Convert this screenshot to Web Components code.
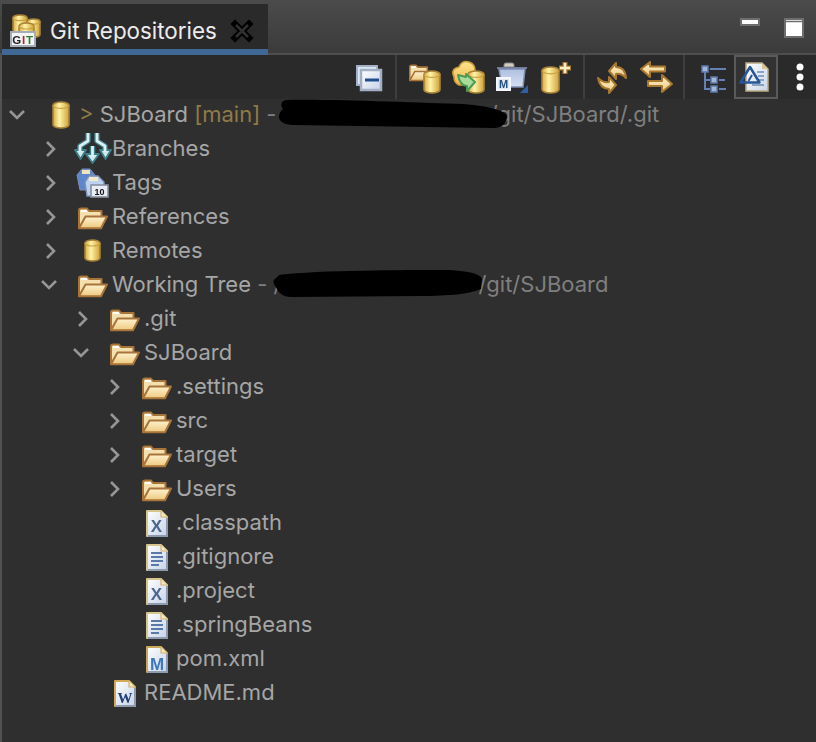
<!DOCTYPE html>
<html>
<head>
<meta charset="utf-8">
<style>
  html, body { margin: 0; background: #2f2f2f; }
  body { font-family: Inter, "Liberation Sans", sans-serif; }
</style>
</head>
<body>
<git-view>
  <view-tab slot="tab" label="Git Repositories"></view-tab>

  <tool-button slot="tools"><app-icon name="collapse"></app-icon></tool-button>
  <tool-sep slot="tools"></tool-sep>
  <tool-button slot="tools"><app-icon name="openRepo"></app-icon></tool-button>
  <tool-button slot="tools"><app-icon name="cloneRepo"></app-icon></tool-button>
  <tool-button slot="tools"><app-icon name="maven"></app-icon></tool-button>
  <tool-button slot="tools"><app-icon name="addRepo"></app-icon></tool-button>
  <tool-sep slot="tools"></tool-sep>
  <tool-button slot="tools"><app-icon name="sync"></app-icon></tool-button>
  <tool-button slot="tools"><app-icon name="swap"></app-icon></tool-button>
  <tool-sep slot="tools"></tool-sep>
  <tool-button slot="tools"><app-icon name="hierarchy"></app-icon></tool-button>
  <tool-button slot="tools" active><app-icon name="docLink"></app-icon></tool-button>
  <tool-button slot="tools"><app-icon name="kebab"></app-icon></tool-button>

  <tree-row slot="rows" depth="0" toggle="open" icon="repo"><span class="deco lead">&gt; </span>SJBoard <span class="deco">[main]</span><span class="dim"> - <redact-blob shape="a"></redact-blob>/git/SJBoard/.git</span></tree-row>
  <tree-row slot="rows" depth="1" toggle="closed" icon="branches">Branches</tree-row>
  <tree-row slot="rows" depth="1" toggle="closed" icon="tags">Tags</tree-row>
  <tree-row slot="rows" depth="1" toggle="closed" icon="folder">References</tree-row>
  <tree-row slot="rows" depth="1" toggle="closed" icon="remote">Remotes</tree-row>
  <tree-row slot="rows" depth="1" toggle="open" icon="folder">Working Tree<span class="dim"> - /<redact-blob shape="b"></redact-blob>/git/SJBoard</span></tree-row>
  <tree-row slot="rows" depth="2" toggle="closed" icon="folder">.git</tree-row>
  <tree-row slot="rows" depth="2" toggle="open" icon="folder">SJBoard</tree-row>
  <tree-row slot="rows" depth="3" toggle="closed" icon="folder">.settings</tree-row>
  <tree-row slot="rows" depth="3" toggle="closed" icon="folder">src</tree-row>
  <tree-row slot="rows" depth="3" toggle="closed" icon="folder">target</tree-row>
  <tree-row slot="rows" depth="3" toggle="closed" icon="folder">Users</tree-row>
  <tree-row slot="rows" depth="3" icon="xmlFile">.classpath</tree-row>
  <tree-row slot="rows" depth="3" icon="textFile">.gitignore</tree-row>
  <tree-row slot="rows" depth="3" icon="xmlFile">.project</tree-row>
  <tree-row slot="rows" depth="3" icon="textFile">.springBeans</tree-row>
  <tree-row slot="rows" depth="3" icon="pomFile">pom.xml</tree-row>
  <tree-row slot="rows" depth="2" icon="wordFile">README.md</tree-row>
</git-view>

<script>
// shared gradients, scoped per shadow root so the ids can repeat
const DEFS = `<defs>
  <linearGradient id="gold" x1="0" x2="1" y1="0" y2="0">
    <stop offset="0" stop-color="#d8ac42"/><stop offset=".4" stop-color="#fff3a8"/><stop offset="1" stop-color="#cfa238"/>
  </linearGradient>
  <linearGradient id="fold" x1="0" x2="0" y1="0" y2="1">
    <stop offset="0" stop-color="#fdf2cf"/><stop offset="1" stop-color="#efc97f"/>
  </linearGradient>
  <linearGradient id="paper" x1="0" x2="1" y1="0" y2="1">
    <stop offset="0" stop-color="#ffffff"/><stop offset="1" stop-color="#c6d3e8"/>
  </linearGradient>
  <linearGradient id="pot" x1="0" x2="0" y1="0" y2="1">
    <stop offset="0" stop-color="#aebfe0"/><stop offset="1" stop-color="#d6e0f2"/>
  </linearGradient>
  <linearGradient id="cloud" x1="0" x2="0" y1="0" y2="1">
    <stop offset="0" stop-color="#fde58c"/><stop offset="1" stop-color="#eeb64e"/>
  </linearGradient>
</defs>`

function cyl(x, y, w, h) {
  const e = Math.max(2.5, w * 0.2)
  return `<path d="M${x} ${y + e}a${w / 2} ${e} 0 0 1 ${w} 0v${h - 2 * e}a${w / 2} ${e} 0 0 1 ${-w} 0z" fill="url(#gold)" stroke="#a98238" stroke-width="1.6"/>
    <path d="M${x} ${y + e}a${w / 2} ${e} 0 0 0 ${w} 0" fill="none" stroke="#c9a33f" stroke-width="1.2"/>`
}

function folder(x, y, s) {
  return `<g transform="translate(${x} ${y}) scale(${s})">
    <path d="M1 21V3.500Q1 1.500 3 1.500H9L11 4H23.500V10H8L1 21Z" fill="#f4dfae" stroke="#a8743a" stroke-width="2" stroke-linejoin="round"/>
    <path d="M3 3H9V5H3Z" fill="#fff"/>
    <path d="M1 21.200L7.500 9.500H29L23 21.200Z" fill="url(#fold)" stroke="#a8743a" stroke-width="2" stroke-linejoin="round"/>
  </g>`
}

function fileShape(edge) {
  return `<path d="M5 3H19L25 9V28H5Z" fill="url(#paper)" stroke="${edge}" stroke-width="2" stroke-linejoin="round"/>
    <path d="M19 3V9H25" fill="#f6e7bd" stroke="#cdb47a" stroke-width="1.2"/>
    <path d="M25 10V28H6" fill="none" stroke="#8d9ab0" stroke-width="2"/>`
}

const ICONS = {
  repo: () => cyl(7, 2, 16, 26),
  remote: () => cyl(7, 4, 15, 21),
  folder: () => folder(0, 5, 1),
  branches: () => `<g fill="none" stroke-linejoin="round">
      <path d="M10 -1V7L2 12V18M19 -1V7L27 12V18M14.500 12V24" stroke="#3d7f8a" stroke-width="5.500"/>
      <path d="M-3 16L2.500 25L8 16ZM22 16L27.500 25L33 16ZM8 20L14.500 29L21 20Z" fill="#cfe8ea" stroke="#3d7f8a" stroke-width="1.800"/>
      <path d="M10 -1V7L2 12V18M19 -1V7L27 12V18M14.500 12V23" stroke="#dcf0f2" stroke-width="2.800"/>
    </g>`,
  tags: () => `<path d="M-1 7L4 1H12L17 7V22H2Z" fill="#5f86cc" stroke="#7b8fb5"/>
    <path d="M4 2H12V6H4Z" fill="#f1e3bb"/>
    <path d="M7 14L11 8H20L26 14V28H9Z" fill="#bcd2f0" stroke="#7f93b8" stroke-width="1.400"/>
    <path d="M11 9H20V13H11Z" fill="#f5e9c8"/>
    <rect x="13" y="17" width="17" height="12" fill="#e8edf5" stroke="#87909e" stroke-width="1.600"/>
    <text x="21.500" y="26.500" text-anchor="middle" font-family="Liberation Sans" font-weight="700" font-size="9" fill="#111">10</text>`,
  xmlFile: () => fileShape("#d8c58e") + `<text x="14.500" y="23.500" text-anchor="middle" font-family="Liberation Sans" font-weight="700" font-size="17" fill="#4a6691">X</text>`,
  textFile: () => fileShape("#d8c58e") + `<path d="M9 11H20M9 15H21M9 19H21M9 23H17" stroke="#5a78aa" stroke-width="1.800"/>`,
  pomFile: () => fileShape("#c9a85e") + `<text x="15" y="26" text-anchor="middle" font-family="Liberation Sans" font-weight="700" font-size="17" fill="#3f78b8">M</text>`,
  wordFile: () => fileShape("#d1aa55") + `<text x="15" y="24.500" text-anchor="middle" font-family="Liberation Serif" font-weight="700" font-size="15" fill="#1f3f77">W</text>`,

  tabGit: () => cyl(3, 0, 14, 18) + cyl(17, 4, 13, 18) + cyl(9, 8, 15, 14) +
    `<rect x="1" y="17" width="24" height="14" fill="#f2f4f6" stroke="#a4acb8" stroke-width="2"/>
     <text x="13" y="28.500" text-anchor="middle" font-family="Liberation Sans" font-weight="700" font-size="11.500" letter-spacing=".8" fill="#222">G<tspan fill="#b3261e">I</tspan><tspan fill="#2e7d32">T</tspan></text>`,
  tabClose: () => `<path d="M3 3L17 17M17 3L3 17" stroke="#000" stroke-width="6.500" stroke-linecap="square"/>
    <path d="M4 4L16 16M16 4L4 16" stroke="#303030" stroke-width="2.600"/>`,

  collapse: () => `<rect x="11" y="11" width="20" height="19" fill="#dce8f4" stroke="#a3afc4" stroke-width="2"/>
    <rect x="15" y="15" width="20" height="20" fill="url(#paper)" stroke="#a3afc4" stroke-width="2.500"/>
    <path d="M19 25H33" stroke="#1f4d8c" stroke-width="3"/>`,
  openRepo: () => folder(7, 9, .78) + cyl(22, 16, 16, 22),
  cloneRepo: () => `<path d="M8 22Q4 14 13 12Q16 5 23 7Q29 9 29 15L29 30H13Q8 28 8 22Z" fill="url(#cloud)" stroke="#c89a3a" stroke-width="1.500"/>` +
    cyl(22, 16, 16, 22) +
    `<path d="M12 20L20 22V19L29 27L21 36V31Q14 31 12 20Z" fill="#a9dc9a" stroke="#4c9a58" stroke-width="2" stroke-linejoin="round"/>`,
  maven: () => `<path d="M14 10Q14 8 16 8H22Q24 8 24 10V12H14Z" fill="#d3cdbf" stroke="#8a8a90"/>
    <path d="M7 13H37" stroke="#6f7b98" stroke-width="2"/>
    <path d="M9 14H35L33 32H12Z" fill="url(#pot)" stroke="#7e8db0" stroke-width="1.500"/>
    <rect x="7" y="23" width="13" height="12" fill="#dfe8f4" stroke="#f4f6f9" stroke-width="2"/>
    <text x="13.500" y="33" text-anchor="middle" font-family="Liberation Sans" font-weight="700" font-size="11" fill="#24507f">M</text>
    <path d="M38 30V38H30Z" fill="#2f5fa5"/>`,
  addRepo: () => cyl(8, 12, 17, 26) +
    `<path d="M31 7V19M25 13H37" stroke="#a67a33" stroke-width="5"/><path d="M31 8V18M26 13H36" stroke="#fbeec2" stroke-width="2.500"/>`,
  sync: () => `<g stroke="#a8782e" stroke-width="2" stroke-linejoin="round" fill="url(#fold)">
      <path d="M19 16L26 8V12Q35 12 36 23Q31 18 26 19V24Z"/>
      <path d="M26 30L19 38V34Q10 34 8 23Q13 28 19 27V22Z"/>
    </g>`,
  swap: () => `<g stroke="#a8782e" stroke-width="2" stroke-linejoin="round" fill="url(#fold)">
      <path d="M7 14L16 7V11.500H31V16.500H16V22Z"/>
      <path d="M38 29L28 20V26H14V31H28V37Z"/>
    </g>`,
  hierarchy: () => `<path d="M15 15V34H20M15 25H20" fill="none" stroke="#6480b4" stroke-width="2"/>
    <path d="M20 14H36M29 25H35M29 34H36" stroke="#6480b4" stroke-width="2"/>
    <rect x="12" y="11" width="6" height="6" fill="#a4b6d6" stroke="#5d79ad" stroke-width="1.500"/>
    <rect x="21" y="22" width="6" height="6" fill="#a4b6d6" stroke="#5d79ad" stroke-width="1.500"/>
    <rect x="21" y="31" width="6" height="6" fill="#a4b6d6" stroke="#5d79ad" stroke-width="1.500"/>`,
  docLink: () => `<path d="M12 8H28L34 14V36H12Z" fill="url(#paper)" stroke="#b7a982" stroke-width="1.500"/>
    <path d="M28 8V14H34" fill="#d8c48d"/>
    <path d="M23 17H30M24 21H30M24 25H30M18 30H30" stroke="#6a86b4" stroke-width="1.500"/>
    <path d="M6.500 27.500L16 12L25.500 27.500Z" fill="none" stroke="#1f4f92" stroke-width="2.500" stroke-linejoin="round"/>
    <path d="M14.500 26L18 20" stroke="#1f4f92" stroke-width="2"/>`,
  kebab: () => `<circle cx="22" cy="12" r="3.500" fill="#fff"/><circle cx="22" cy="22" r="3.500" fill="#fff"/><circle cx="22" cy="32" r="3.500" fill="#fff"/>`,
  winMin: () => `<rect x="1" y="1" width="18" height="6" fill="#fff" stroke="#6e6e6e" stroke-width="2"/>`,
  winMax: () => `<rect x="1" y="1" width="18" height="18" fill="#fff" stroke="#6e6e6e" stroke-width="2"/><path d="M2 3.500H18" stroke="#6e6e6e" stroke-width="1.500"/>`
}

const SIZES = { tabGit: [32, 32], tabClose: [20, 20], winMin: [20, 8], winMax: [20, 20] }
const TOOL_ICONS = ["collapse", "openRepo", "cloneRepo", "maven", "addRepo", "sync", "swap", "hierarchy", "docLink", "kebab"]
// the original icons are upscaled 16px bitmaps, so most of them look a bit soft
const CRISP = ["kebab", "winMin", "winMax", "tabClose"]

class AppIcon extends HTMLElement {
  static get observedAttributes() {
    return ["name"]
  }
  constructor() {
    super()
    this.attachShadow({ mode: "open" })
  }
  attributeChangedCallback() {
    const name = this.getAttribute("name")
    if (!ICONS[name]) return
    const tool = TOOL_ICONS.includes(name)
    const [w, h] = SIZES[name] || (tool ? [44, 44] : [30, 30])
    const soft = CRISP.includes(name) ? "" : "filter: blur(.4px);"
    this.shadowRoot.innerHTML = `
      <style>
        :host { display: block; width: ${w}px; height: ${h}px; flex: none; }
        svg { display: block; overflow: visible; ${soft} }
      </style>
      <svg width="${w}" height="${h}" viewBox="0 0 ${w} ${h}">${DEFS}${ICONS[name]()}</svg>`
  }
}
customElements.define("app-icon", AppIcon)

const viewTemplate = document.createElement("template")
viewTemplate.innerHTML = `
  <style>
    :host { display: block; width: 816px; height: 742px; background: #2f2f2f; overflow: hidden; }
    .head {
      display: flex; height: 53px; padding: 4px 0 0 2px; box-sizing: border-box;
      background: linear-gradient(#4b4b4b, #3b3b3b);
    }
    .win { margin-left: auto; display: flex; gap: 24px; padding: 14px 12px 0 0; align-items: flex-start; }
    .bar {
      display: flex; height: 44px; padding-left: 344px;
      background: #2a2a2a; border-top: 2px solid #4e4e4e; border-left: 2px solid #525252;
    }
    .rows { margin-top: -1px; border-left: 2px solid #525252; height: 646px; }
  </style>
  <div class="head">
    <slot name="tab"></slot>
    <div class="win">
      <app-icon name="winMin"></app-icon>
      <app-icon name="winMax"></app-icon>
    </div>
  </div>
  <div class="bar"><slot name="tools"></slot></div>
  <div class="rows"><slot name="rows"></slot></div>
`
class GitView extends HTMLElement {
  constructor() {
    super()
    this.attachShadow({ mode: "open" })
    this.shadowRoot.appendChild(viewTemplate.content.cloneNode(true))
  }
}
customElements.define("git-view", GitView)

class ViewTab extends HTMLElement {
  constructor() {
    super()
    this.attachShadow({ mode: "open" })
    this.shadowRoot.innerHTML = `
      <style>
        :host {
          display: flex; align-items: center; box-sizing: border-box;
          width: 266px; height: 51px; padding: 8px 16px 0 8px;
          background: #2a2a2a; border-bottom: 6px solid #3f6894;
          color: #ececec; font: 22.4px Inter, "Liberation Sans", sans-serif;
        }
        .name { margin-left: 8px; flex: 1; }
      </style>
      <app-icon name="tabGit"></app-icon>
      <span class="name">${this.getAttribute("label")}</span>
      <app-icon name="tabClose"></app-icon>`
  }
}
customElements.define("view-tab", ViewTab)

class ToolButton extends HTMLElement {
  constructor() {
    super()
    this.attachShadow({ mode: "open" })
    this.shadowRoot.innerHTML = `
      <style>
        :host { display: block; position: relative; width: 44px; height: 44px; flex: none; }
        :host([active])::after {
          content: ""; position: absolute; inset: 0;
          border: 2px solid #5a5a5a; background: #ffffff0a;
        }
      </style>
      <slot></slot>`
  }
}
customElements.define("tool-button", ToolButton)

class ToolSep extends HTMLElement {
  constructor() {
    super()
    this.attachShadow({ mode: "open" })
    this.shadowRoot.innerHTML = `<style>:host { display: block; width: 2px; height: 44px; margin: 0 5px; background: #3e3e3e; flex: none; }</style>`
  }
}
customElements.define("tool-sep", ToolSep)

const rowTemplate = document.createElement("template")
rowTemplate.innerHTML = `
  <style>
    :host {
      display: flex; align-items: center; height: 34px;
      color: #a6a6a6; font: 22px Inter, "Liberation Sans", sans-serif; white-space: nowrap;
    }
    .arrow { width: 32px; height: 34px; flex: none; margin-right: 12px; }
    .arrow svg { display: block; }
    .label { margin-left: 4px; position: relative; top: -1px; }
    ::slotted(.deco) { color: #8f7b47; }
    ::slotted(.lead) { margin-left: -1px; }
    ::slotted(.dim) { color: #7f7f7f; }
  </style>
  <div class="arrow"></div>
  <app-icon></app-icon>
  <span class="label"><slot></slot></span>
`
class TreeRow extends HTMLElement {
  constructor() {
    super()
    this.attachShadow({ mode: "open" })
    this.shadowRoot.appendChild(rowTemplate.content.cloneNode(true))
    const depth = parseInt(this.getAttribute("depth") || "0")
    this.style.paddingLeft = `${32 * depth}px`
    this.shadowRoot.querySelector("app-icon").setAttribute("name", this.getAttribute("icon"))
    const toggle = this.getAttribute("toggle")
    const arrow = this.shadowRoot.querySelector(".arrow")
    if (toggle == "open") {
      arrow.innerHTML = `<svg width="32" height="34"><path d="M8 13L15 20L22 13" fill="none" stroke="#969696" stroke-width="2.600"/></svg>`
    } else if (toggle == "closed") {
      arrow.innerHTML = `<svg width="32" height="34"><path d="M13 10L20 17L13 24" fill="none" stroke="#969696" stroke-width="2.600"/></svg>`
    }
  }
}
customElements.define("tree-row", TreeRow)

// scribbled-out part of a path: holds its width in the line, the ink lies over the text
const BLOBS = {
  a: { w: 207, left: -5, d: "M8 1C60 0 140 4 186 5C206 7 226 10 229 17C229 24 224 29 216 29L15 26C6 26 1 22 1 18C1 14 3 12 5 10C2 6 3 2 8 1Z" },
  b: { w: 197, left: -10, d: "M8 6C50 1 130 1 178 1C198 2 210 5 211 10L210 20C198 25 178 27 150 27L20 28C12 28 8 24 6 20C3 16 1 12 4 10Z" }
}
class RedactBlob extends HTMLElement {
  constructor() {
    super()
    this.attachShadow({ mode: "open" })
    const b = BLOBS[this.getAttribute("shape")]
    this.shadowRoot.innerHTML = `
      <style>
        :host { display: inline-block; position: relative; width: ${b.w}px; height: 1px; }
        svg { position: absolute; left: ${b.left}px; top: -22px; overflow: visible; }
      </style>
      <svg width="240" height="32"><path d="${b.d}" fill="#000"/></svg>`
  }
}
customElements.define("redact-blob", RedactBlob)
</script>
</body>
</html>
